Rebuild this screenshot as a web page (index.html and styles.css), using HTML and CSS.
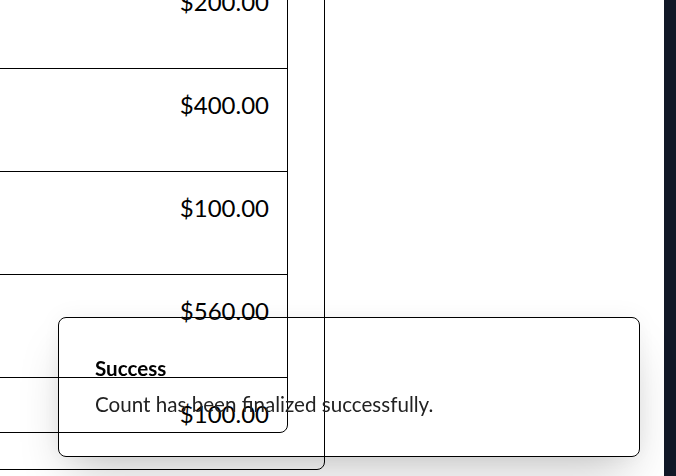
FILE: index.html
```html
<!DOCTYPE html>
<html lang="en">
<head>
<meta charset="utf-8">
<title>Count</title>
<link rel="stylesheet" href="styles.css">
</head>
<body>
<div class="layout">
  <main class="content">
    <section class="card">
      <div class="table">
        <div class="row"><span class="amount">$200.00</span></div>
        <div class="row"><span class="amount">$400.00</span></div>
        <div class="row"><span class="amount">$100.00</span></div>
        <div class="row"><span class="amount">$560.00</span></div>
        <div class="row"><span class="amount">$100.00</span></div>
      </div>
    </section>
  </main>
  <aside class="sidebar"></aside>
</div>
<div class="toast" role="status">
  <div class="toast-title">Success</div>
  <div class="toast-text">Count has been finalized successfully.</div>
</div>
</body>
</html>
```

FILE: styles.css
```css
* { box-sizing: border-box; }
html, body {
  margin: 0;
  height: 100%;
  background: #fff;
  font-family: Lato, "Noto Sans", sans-serif;
  color: #000;
  overflow: hidden;
}
.layout {
  display: grid;
  grid-template-columns: 1fr 12px;
  height: 100vh;
}
.content {
  overflow: hidden;
}
.sidebar {
  background: #111827;
}
.card {
  margin-top: -72px;
  margin-left: -200px;
  width: 525px;
  border: 1px solid #000;
  border-radius: 8px;
  padding: 36px;
}
.table {
  height: 468px;
  border: 1px solid #000;
  border-radius: 8px;
  overflow: hidden;
}
.row {
  display: flex;
  justify-content: flex-end;
  padding: 20px 18px 50px 0;
  border-bottom: 1px solid #000;
  font-size: 24px;
  line-height: 32px;
}
.toast {
  position: fixed;
  left: 58px;
  top: 317px;
  width: 582px;
  height: 140px;
  border: 1px solid #000;
  border-radius: 8px;
  padding: 36px;
  background: transparent;
  box-shadow: 0 25px 50px -12px rgba(0,0,0,0.22), 0 0 24px rgba(0,0,0,0.05);
}
.toast-title {
  font-weight: 700;
  font-size: 20.6px;
  line-height: 28px;
  color: #000;
}
.toast-text {
  margin-top: 8px;
  font-size: 20.6px;
  line-height: 28px;
  color: #222;
}
```
